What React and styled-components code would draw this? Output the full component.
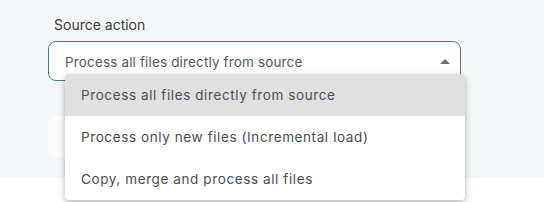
import React from 'react'
import styled, { createGlobalStyle } from 'styled-components'

const Global = createGlobalStyle`
  html, body { margin: 0; padding: 0; background: #ffffff; }
  body { font-family: Inter, "Noto Sans", sans-serif; }
`

const Page = styled.div`
  width: 544px;
  height: 202px;
  overflow: hidden;
  background: #ffffff;
`

const Panel = styled.div`
  background: #f5f7f8;
  height: 178px;
  padding: 16px 0 0 48px;
  box-sizing: border-box;
  display: flex;
  flex-direction: column;
`

const Label = styled.label`
  font-size: 14px;
  color: #3b3f44;
  padding-left: 6px;
  line-height: 18px;
  margin-bottom: 7px;
`

const SelectWrap = styled.div`
  position: relative;
  width: 413px;
`

const Select = styled.div`
  height: 40px;
  box-sizing: border-box;
  border: 1px solid #3e7f98;
  border-radius: 8px;
  background: #ffffff;
  display: flex;
  align-items: center;
  justify-content: space-between;
  padding: 2px 10px 0 16px;
  font-size: 13.5px;
  color: #55595e;
  letter-spacing: 0.15px;
`

const Caret = styled.span`
  width: 0;
  height: 0;
  border-left: 5px solid transparent;
  border-right: 5px solid transparent;
  border-bottom: 5px solid #6b6e72;
  margin-top: -2px;
`

const Menu = styled.ul`
  position: absolute;
  top: 33px;
  left: 17px;
  width: 400px;
  margin: 0;
  padding: 0;
  list-style: none;
  background: #ffffff;
  border-radius: 4px;
  box-shadow: 0 3px 8px rgba(0, 0, 0, 0.22), 0 1px 3px rgba(0, 0, 0, 0.12);
  overflow: hidden;
  z-index: 2;
`

const Item = styled.li`
  height: 42px;
  display: flex;
  align-items: center;
  padding-left: 16px;
  font-size: 13.5px;
  letter-spacing: 0.6px;
  color: #4a4e53;
  background: ${p => (p.$active ? '#e0e0e0' : '#ffffff')};
`

const Behind = styled.div`
  margin-top: 35px;
  width: 200px;
  height: 41px;
  border-radius: 8px;
  background: #fcfcfd;
`

const options = [
  'Process all files directly from source',
  'Process only new files (Incremental load)',
  'Copy, merge and process all files',
]

export default function App() {
  return (
    <Page>
      <Global />
      <Panel>
        <Label>Source action</Label>
        <SelectWrap>
          <Select>
            <span>{options[0]}</span>
            <Caret />
          </Select>
          <Menu>
            {options.map((o, i) => (
              <Item key={o} $active={i === 0}>{o}</Item>
            ))}
          </Menu>
        </SelectWrap>
        <Behind />
      </Panel>
    </Page>
  )
}
